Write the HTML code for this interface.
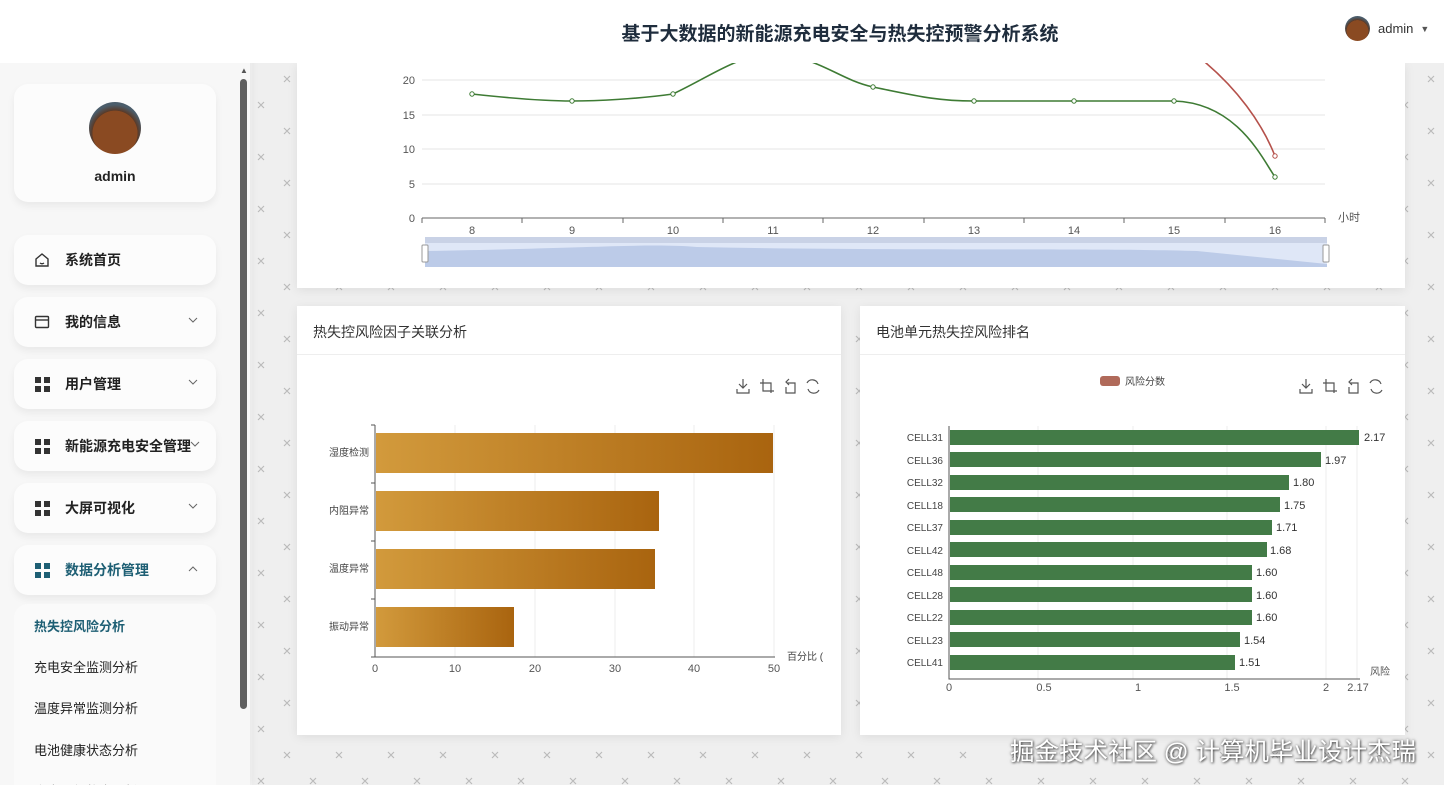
<!DOCTYPE html>
<html><head><meta charset="utf-8">
<style>
*{margin:0;padding:0;box-sizing:border-box}
html,body{width:1444px;height:785px;overflow:hidden}
body{background:#f3f3f3;font-family:"Liberation Sans","Noto Sans CJK SC",sans-serif;position:relative}
.hdr{position:absolute;left:0;top:0;width:1444px;height:63px;background:#fff;z-index:3}
.title{position:absolute;left:0;width:1680px;text-align:center;top:19px;font-size:19px;font-weight:bold;color:#1f2d3d}
.user{position:absolute;left:1345px;top:16px;display:flex;align-items:center;font-size:13px;color:#333}
.av{border-radius:50%;background:radial-gradient(circle at 50% 60%,#8a4a22 0 55%,#5a3a28 56%,#4b5d6b 70%);}
.side{position:absolute;left:0;top:52px;width:250px;height:733px;background:#f7f7f7;box-shadow:2px 0 8px rgba(0,0,0,.05);z-index:2;overflow:hidden}
.card{position:absolute;left:14px;width:202px;background:#fcfcfc;border-radius:14px;box-shadow:0 4px 8px rgba(0,0,0,.06)}
.mi{height:50px;display:flex;align-items:center;padding-left:20px;font-size:14px;font-weight:bold;color:#222}
.mi .ic{width:16px;height:16px;margin-right:15px;display:inline-block;flex:none}
.mi .ic.grid4{display:grid;grid-template-columns:6px 6px;grid-template-rows:6px 6px;gap:3px;width:15px;height:15px;margin-left:1px}
.grid4 i{width:6px;height:6px;background:#333;display:block}
.chev{position:absolute;right:18px;top:20px}
.sub{position:absolute;left:34px;font-size:13px;color:#222}
.main{position:absolute;left:252px;top:63px;width:1192px;height:722px;background-color:#efefef;
background-image:url("data:image/svg+xml;utf8,<svg xmlns='http://www.w3.org/2000/svg' width='52' height='52'><g stroke='%23bbb' stroke-width='1.2'><path d='M32 13l6 6M38 13l-6 6M6 39l6 6M12 39l-6 6'/></g></svg>")}
.pc{position:absolute;background:#fff;box-shadow:0 2px 10px rgba(0,0,0,.08)}
.ct{position:absolute;left:16px;top:16px;font-size:14px;color:#333}
.sep{position:absolute;left:0;right:0;top:48px;border-top:1px solid #eee}
svg text{font-family:"Liberation Sans","Noto Sans CJK SC",sans-serif}
.wm{position:absolute;left:1010px;top:733px;font-size:24.5px;color:#fff;text-shadow:0 0 3px rgba(0,0,0,.6),1px 1px 2px rgba(0,0,0,.5);z-index:5;white-space:nowrap}
</style></head><body>
<div class="hdr">
 <div class="title">基于大数据的新能源充电安全与热失控预警分析系统</div>
 <div class="user"><div class="av" style="width:25px;height:25px"></div><span style="margin-left:8px">admin</span><span style="margin-left:7px;font-size:9px;color:#555">▼</span></div>
</div>
<div class="side">
 <div style="position:absolute;left:240px;top:14px;font-size:8px;color:#555">▲</div>
 <div style="position:absolute;left:240px;top:27px;width:7px;height:630px;background:#5f5f5f;border-radius:4px"></div>
 <div class="card" style="top:32px;height:118px">
  <div class="av" style="position:absolute;left:75px;top:18px;width:52px;height:52px"></div>
  <div style="position:absolute;left:0;right:0;top:84px;text-align:center;font-size:14px;font-weight:bold;color:#222">admin</div>
 </div>
 <div class="card mi" style="top:183px"><svg class="ic" viewBox="0 0 16 16"><path d="M2 7L8 2l6 5v7H2z M6 11q2 1.5 4 0" fill="none" stroke="#333" stroke-width="1.4"/></svg>系统首页</div>
 <div class="card mi" style="top:245px"><svg class="ic" viewBox="0 0 16 16"><rect x="1.5" y="2.5" width="13" height="11" rx="1" fill="none" stroke="#333" stroke-width="1.4"/><path d="M1.5 6h13" stroke="#333" stroke-width="1.4"/></svg>我的信息<svg class="chev" width="10" height="7"><path d="M1 1l4 4 4-4" fill="none" stroke="#666"/></svg></div>
 <div class="card mi" style="top:307px"><span class="ic grid4"><i></i><i></i><i></i><i></i></span>用户管理<svg class="chev" width="10" height="7"><path d="M1 1l4 4 4-4" fill="none" stroke="#666"/></svg></div>
 <div class="card mi" style="top:369px"><span class="ic grid4"><i></i><i></i><i></i><i></i></span>新能源充电安全管理<svg class="chev" width="10" height="7" style="right:16px"><path d="M1 1l4 4 4-4" fill="none" stroke="#666"/></svg></div>
 <div class="card mi" style="top:431px"><span class="ic grid4"><i></i><i></i><i></i><i></i></span>大屏可视化<svg class="chev" width="10" height="7"><path d="M1 1l4 4 4-4" fill="none" stroke="#666"/></svg></div>
 <div class="card mi" style="top:493px;color:#1e5f74"><span class="ic grid4"><i style="background:#1e5f74"></i><i style="background:#1e5f74"></i><i style="background:#1e5f74"></i><i style="background:#1e5f74"></i></span>数据分析管理<svg class="chev" width="10" height="7"><path d="M1 6l4-4 4 4" fill="none" stroke="#666"/></svg></div>
 <div class="card" style="top:552px;height:200px;box-shadow:none;background:#fafafa"></div>
 <div class="sub" style="top:564px;color:#1e5f74;font-weight:bold">热失控风险分析</div>
 <div class="sub" style="top:605px">充电安全监测分析</div>
 <div class="sub" style="top:646px">温度异常监测分析</div>
 <div class="sub" style="top:688px">电池健康状态分析</div>
 <div class="sub" style="top:729px">充电运行状态分析</div>
</div>
<div class="main">
 <div class="pc" style="left:45px;top:0;width:1108px;height:225px">
  <svg width="1108" height="225" style="position:absolute;left:0;top:0">
   <g stroke="#e6e6e6"><path d="M125 17H1028M125 52H1028M125 86H1028M125 121H1028"/></g>
   <path d="M125 155H1028" stroke="#666"/>
   <g stroke="#666"><path d="M125 155v5M225 155v5M326 155v5M426 155v5M526 155v5M627 155v5M727 155v5M827 155v5M928 155v5M1028 155v5"/></g>
   <g font-size="11" fill="#555" text-anchor="end"><text x="118" y="21">20</text><text x="118" y="56">15</text><text x="118" y="90">10</text><text x="118" y="125">5</text><text x="118" y="159">0</text></g>
   <g font-size="11" fill="#555" text-anchor="middle"><text x="175" y="171">8</text><text x="275" y="171">9</text><text x="376" y="171">10</text><text x="476" y="171">11</text><text x="576" y="171">12</text><text x="677" y="171">13</text><text x="777" y="171">14</text><text x="877" y="171">15</text><text x="978" y="171">16</text></g>
   <text x="1041" y="158" font-size="11" fill="#555">小时</text>
   <path d="M903 -5C940 25 965 60 978 93" fill="none" stroke="#b5514b" stroke-width="1.6"/>
   <circle cx="978" cy="93" r="2.2" fill="#fff" stroke="#b5514b"/>
   <path d="M175 31C220 36 250 38 275 38C300 38 340 36 376 31C420 10 440 -8 476 -8C520 -8 540 16 576 24C620 33 640 38 677 38L877 38C940 40 965 95 978 114" fill="none" stroke="#3e7b34" stroke-width="1.6"/>
   <g fill="#fff" stroke="#3e7b34"><circle cx="175" cy="31" r="2.2"/><circle cx="275" cy="38" r="2.2"/><circle cx="376" cy="31" r="2.2"/><circle cx="576" cy="24" r="2.2"/><circle cx="677" cy="38" r="2.2"/><circle cx="777" cy="38" r="2.2"/><circle cx="877" cy="38" r="2.2"/><circle cx="978" cy="114" r="2.2"/></g>
   <rect x="128" y="174" width="902" height="30" fill="#dfe7f7"/>
   <rect x="128" y="174" width="902" height="6" fill="#c9d2e6"/>
   <path d="M128 188C300 185 350 180 400 184C600 188 800 185 900 188L1030 201V204H128Z" fill="#bccbe8"/>
   <rect x="125" y="182" width="6" height="17" rx="1" fill="#fff" stroke="#999"/>
   <rect x="1026" y="182" width="6" height="17" rx="1" fill="#fff" stroke="#999"/>
  </svg>
 </div>
 <div class="pc" style="left:45px;top:243px;width:544px;height:429px">
  <div class="ct">热失控风险因子关联分析</div><div class="sep"></div>
  <svg width="544" height="429" style="position:absolute;left:0;top:0">
   <defs><linearGradient id="og"><stop offset="0" stop-color="#d29a3c"/><stop offset="1" stop-color="#a9640f"/></linearGradient></defs>
   <g fill="none" stroke="#555" stroke-width="1.2"><path d="M446 82v-9M442 78l4 4 4-4M440 83v4h12v-4"/><path d="M466 73v12h11M463 77h11v10"/><path d="M490 77h8v10h-9v-6M492 73l-3 3 3 3"/><path d="M510 77a6 6 0 0 1 11 1M522 84a6 6 0 0 1-11-1"/></g>
   <g stroke="#eee"><path d="M158 119v232M238 119v232M318 119v232M397 119v232M477 119v232"/></g>
   <path d="M78 119v232H478" stroke="#555" fill="none"/>
   <g stroke="#555"><path d="M74 119h4M74 177h4M74 235h4M74 293h4M74 351h4"/></g>
   <rect x="79" y="127" width="397" height="40" fill="url(#og)"/>
   <rect x="79" y="185" width="283" height="40" fill="url(#og)"/>
   <rect x="79" y="243" width="279" height="40" fill="url(#og)"/>
   <rect x="79" y="301" width="138" height="40" fill="url(#og)"/>
   <g font-size="10" fill="#444" text-anchor="end"><text x="72" y="150">湿度检测</text><text x="72" y="208">内阻异常</text><text x="72" y="266">温度异常</text><text x="72" y="324">振动异常</text></g>
   <g font-size="11" fill="#555" text-anchor="middle"><text x="78" y="366">0</text><text x="158" y="366">10</text><text x="238" y="366">20</text><text x="318" y="366">30</text><text x="397" y="366">40</text><text x="477" y="366">50</text></g>
   <text x="490" y="354" font-size="10" fill="#444">百分比 (</text>
  </svg>
 </div>
 <div class="pc" style="left:608px;top:243px;width:545px;height:429px">
  <div class="ct">电池单元热失控风险排名</div><div class="sep"></div>
  <svg width="545" height="429" style="position:absolute;left:0;top:0">
   <rect x="240" y="70" width="20" height="10" rx="3" fill="#b06a5a"/>
   <text x="265" y="79" font-size="10" fill="#444">风险分数</text>
   <g fill="none" stroke="#555" stroke-width="1.2"><path d="M446 82v-9M442 78l4 4 4-4M440 83v4h12v-4"/><path d="M466 73v12h11M463 77h11v10"/><path d="M490 77h8v10h-9v-6M492 73l-3 3 3 3"/><path d="M510 77a6 6 0 0 1 11 1M522 84a6 6 0 0 1-11-1"/></g>
   <g stroke="#eee"><path d="M178 120v253M273 120v253M367 120v253M466 120v253M497 120v253"/></g>
   <path d="M89 120v253H500" stroke="#555" fill="none"/>
   <g fill="#437b47">
    <rect x="90" y="124" width="409" height="15"/><rect x="90" y="146" width="371" height="15"/><rect x="90" y="169" width="339" height="15"/><rect x="90" y="191" width="330" height="15"/><rect x="90" y="214" width="322" height="15"/><rect x="90" y="236" width="317" height="15"/><rect x="90" y="259" width="302" height="15"/><rect x="90" y="281" width="302" height="15"/><rect x="90" y="304" width="302" height="15"/><rect x="90" y="326" width="290" height="15"/><rect x="90" y="349" width="285" height="15"/>
   </g>
   <g font-size="10" fill="#444" text-anchor="end"><text x="83" y="135">CELL31</text><text x="83" y="158">CELL36</text><text x="83" y="180">CELL32</text><text x="83" y="203">CELL18</text><text x="83" y="225">CELL37</text><text x="83" y="248">CELL42</text><text x="83" y="270">CELL48</text><text x="83" y="293">CELL28</text><text x="83" y="315">CELL22</text><text x="83" y="338">CELL23</text><text x="83" y="360">CELL41</text></g>
   <g font-size="11" fill="#333"><text x="504" y="135">2.17</text><text x="465" y="158">1.97</text><text x="433" y="180">1.80</text><text x="424" y="203">1.75</text><text x="416" y="225">1.71</text><text x="410" y="248">1.68</text><text x="396" y="270">1.60</text><text x="396" y="293">1.60</text><text x="396" y="315">1.60</text><text x="384" y="338">1.54</text><text x="379" y="360">1.51</text></g>
   <g font-size="11" fill="#555" text-anchor="middle"><text x="89" y="385">0</text><text x="184" y="385">0.5</text><text x="278" y="385">1</text><text x="372" y="385">1.5</text><text x="466" y="385">2</text><text x="498" y="385">2.17</text></g>
   <text x="510" y="369" font-size="10" fill="#555">风险</text>
  </svg>
 </div>
</div>
<div class="wm">掘金技术社区 @ 计算机毕业设计杰瑞</div>
</body></html>
